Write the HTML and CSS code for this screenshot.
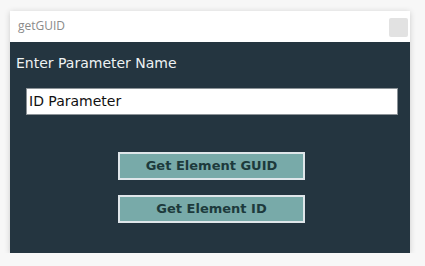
FILE: index.html
```html
<!DOCTYPE html>
<html>
<head>
<meta charset="utf-8">
<link rel="stylesheet" href="styles.css">
</head>
<body>
<div class="window">
  <div class="titlebar">
    <span class="title">getGUID</span>
    <span class="close"></span>
  </div>
  <div class="content">
    <div class="label">Enter Parameter Name</div>
    <div class="field">ID Parameter</div>
    <div class="actions">
      <div class="btn">Get Element GUID</div>
      <div class="btn">Get Element ID</div>
    </div>
  </div>
</div>
</body>
</html>
```
FILE: styles.css
```css
html, body {
  margin: 0;
  padding: 0;
  background: #f7f7f7;
}
body {
  padding: 11px 0 0 10px;
}
.window {
  width: 400px;
  box-shadow: 0 1px 6px rgba(0, 0, 0, 0.18);
}
.titlebar {
  height: 31px;
  background: #ffffff;
  display: flex;
  align-items: center;
  justify-content: space-between;
  padding: 0 2px 0 8px;
}
.title {
  font-family: "Open Sans", "Noto Sans", sans-serif;
  font-size: 12px;
  color: #8a8a8a;
  margin-top: -2px;
}
.close {
  width: 19px;
  height: 19px;
  background: #e2e2e2;
  border-radius: 2px;
  margin-top: 1px;
}
.content {
  background: #243540;
  height: 211px;
  box-sizing: border-box;
  padding: 12px 0 0 0;
  font-family: "Comic Sans MS", "DejaVu Sans", sans-serif;
}
.label {
  color: #eef2f3;
  font-size: 14px;
  line-height: 18px;
  padding-left: 6px;
}
.field {
  margin: 16px 0 0 16px;
  width: 372px;
  height: 27px;
  box-sizing: border-box;
  background: #ffffff;
  border: 1px solid #8c9398;
  color: #111;
  font-size: 14px;
  line-height: 25px;
  padding-left: 2px;
}
.actions {
  margin-top: 37px;
  display: flex;
  flex-direction: column;
  align-items: center;
  gap: 15px;
  padding-left: 3px;
}
.btn {
  width: 187px;
  height: 28px;
  box-sizing: border-box;
  border: 2px solid #dfe6ea;
  background: #78aaa9;
  color: #1d3a3c;
  font-weight: bold;
  font-size: 13px;
  line-height: 24px;
  text-align: center;
}
```
